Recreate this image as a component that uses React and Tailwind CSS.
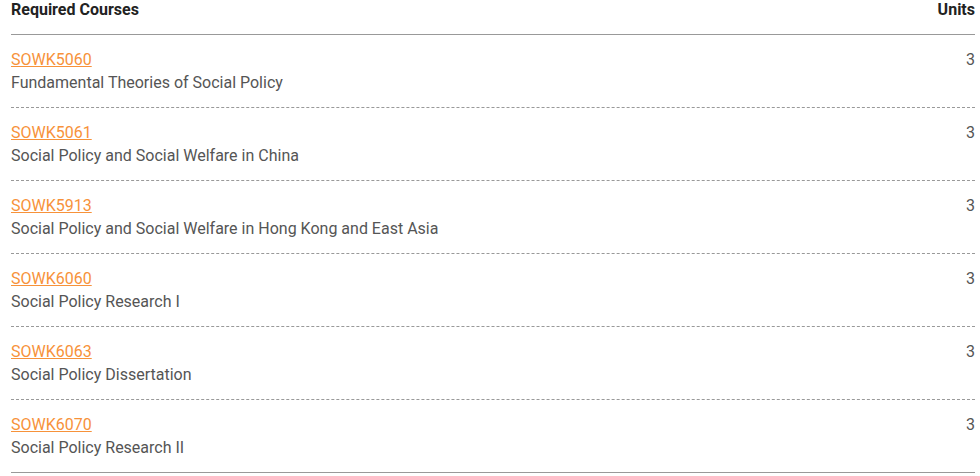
const courses = [
  { code: 'SOWK5060', title: 'Fundamental Theories of Social Policy', units: 3 },
  { code: 'SOWK5061', title: 'Social Policy and Social Welfare in China', units: 3 },
  { code: 'SOWK5913', title: 'Social Policy and Social Welfare in Hong Kong and East Asia', units: 3 },
  { code: 'SOWK6060', title: 'Social Policy Research I', units: 3 },
  { code: 'SOWK6063', title: 'Social Policy Dissertation', units: 3 },
  { code: 'SOWK6070', title: 'Social Policy Research II', units: 3 },
];

export default function App() {
  return (
    <div className="bg-white pl-[11px] pr-[5px] font-['Roboto',sans-serif]">
      {/* Header */}
      <div className="flex justify-between border-b border-[#999] pb-[14px] text-[16px] font-bold leading-[20px] text-[#222]">
        <span>Required Courses</span>
        <span>Units</span>
      </div>

      {/* Rows */}
      <div>
        {courses.map((c, i) => (
          <div
            key={c.code}
            className={`flex justify-between pt-[13px] pb-[13px] text-[16px] leading-[23px] ${
              i === courses.length - 1 ? 'border-b border-[#999]' : 'border-b border-dashed border-[#999]'
            }`}
          >
            <div>
              <a href="#" className="text-[#f7923a] underline">{c.code}</a>
              <p className="text-[#555]">{c.title}</p>
            </div>
            <span className="text-[#555]">{c.units}</span>
          </div>
        ))}
      </div>
    </div>
  );
}
